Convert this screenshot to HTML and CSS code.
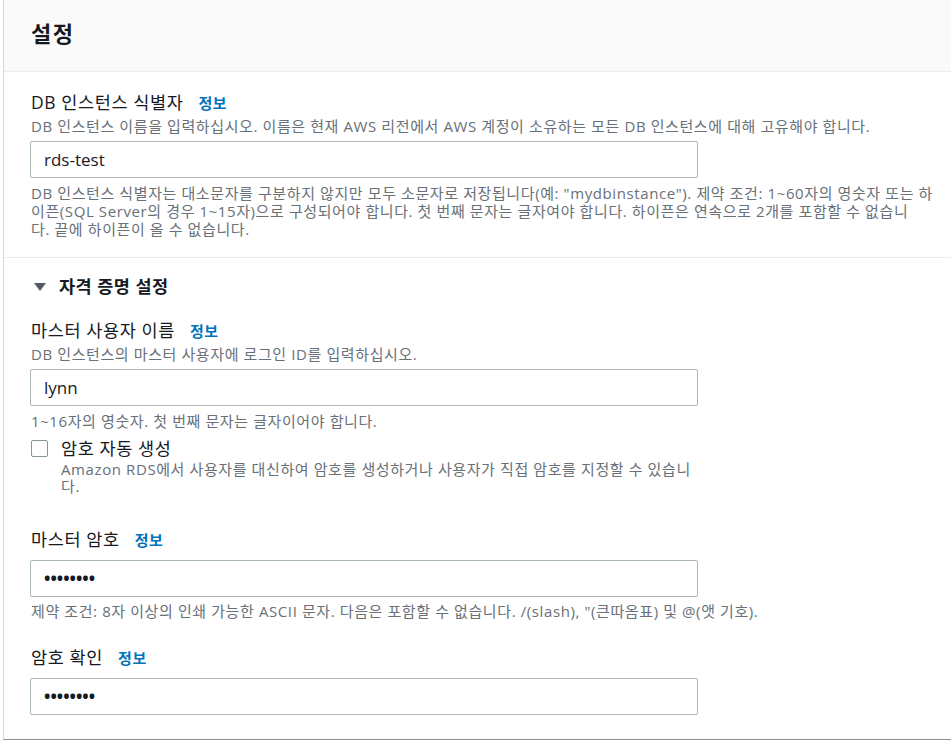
FILE: index.html
```html
<!DOCTYPE html>
<html lang="ko">
<head>
    <meta charset="UTF-8">
    <meta name="viewport" content="width=device-width, initial-scale=1.0">
    <title>설정</title>
    <link rel="stylesheet" href="styles.css">
</head>
<body>
<div class="panel">
    <div class="panel-header">
        <h2>설정</h2>
    </div>

    <div class="section">
        <div class="label">DB 인스턴스 식별자 <a class="info" href="#">정보</a></div>
        <div class="desc">DB 인스턴스 이름을 입력하십시오. 이름은 현재 AWS 리전에서 AWS 계정이 소유하는 모든 DB 인스턴스에 대해 고유해야 합니다.</div>
        <div class="input">rds-test</div>
        <div class="hint">DB 인스턴스 식별자는 대소문자를 구분하지 않지만 모두 소문자로 저장됩니다(예: "mydbinstance"). 제약 조건: 1~60자의 영숫자 또는 하이픈(SQL Server의 경우 1~15자)으로 구성되어야 합니다. 첫 번째 문자는 글자여야 합니다. 하이픈은 연속으로 2개를 포함할 수 없습니<br>다. 끝에 하이픈이 올 수 없습니다.</div>
    </div>

    <div class="section expand">
        <div class="expand-title"><span class="caret"></span>자격 증명 설정</div>

        <div class="field">
            <div class="label">마스터 사용자 이름 <a class="info" href="#">정보</a></div>
            <div class="desc">DB 인스턴스의 마스터 사용자에 로그인 ID를 입력하십시오.</div>
            <div class="input">lynn</div>
            <div class="hint">1~16자의 영숫자. 첫 번째 문자는 글자이어야 합니다.</div>
            <div class="check">
                <span class="box"></span>
                <div>
                    <div class="check-label">암호 자동 생성</div>
                    <div class="check-desc">Amazon RDS에서 사용자를 대신하여 암호를 생성하거나 사용자가 직접 암호를 지정할 수 있습니다.</div>
                </div>
            </div>
        </div>

        <div class="field password">
            <div class="label">마스터 암호 <a class="info" href="#">정보</a></div>
            <div class="input secret">••••••••</div>
            <div class="hint">제약 조건: 8자 이상의 인쇄 가능한 ASCII 문자. 다음은 포함할 수 없습니다. /(slash), "(큰따옴표) 및 @(앳 기호).</div>
        </div>

        <div class="field confirm">
            <div class="label">암호 확인 <a class="info" href="#">정보</a></div>
            <div class="input secret">••••••••</div>
        </div>
    </div>
</div>
</body>
</html>
```

FILE: styles.css
```css
body {
    margin: 0;
    padding: 0 0 0 3px;
    font-family: 'Open Sans', 'Noto Sans CJK KR', sans-serif;
    background-color: #fff;
    color: #16191f;
    overflow: hidden;
}

.panel {
    width: 960px;
    border-left: 1px solid #d5dbdb;
    border-bottom: 1px solid #879596;
}

.panel-header {
    box-sizing: border-box;
    height: 72px;
    background-color: #fafafa;
    border-bottom: 1px solid #eaeded;
    display: flex;
    align-items: center;
    padding: 0 0 6px 27px;
}

.panel-header h2 {
    margin: 0;
    font-size: 22px;
    font-weight: 700;
    line-height: 28px;
    letter-spacing: 1.5px;
}

.section {
    padding: 19px 20px 19px 26px;
    border-bottom: 1px solid #eaeded;
}

.section.expand {
    padding-top: 17px;
    padding-bottom: 24px;
    border-bottom: none;
}

.label {
    font-size: 17.5px;
    line-height: 22px;
    letter-spacing: 0.6px;
    padding-left: 1px;
}

.info {
    color: #0073bb;
    font-size: 15px;
    font-weight: 700;
    letter-spacing: 0.5px;
    text-decoration: none;
    margin-left: 10px;
}

.desc {
    margin-top: 3px;
    font-size: 15px;
    line-height: 18px;
    letter-spacing: 0.6px;
    color: #687078;
    padding-left: 1px;
}

.input {
    box-sizing: border-box;
    width: 668px;
    height: 37px;
    margin-top: 6px;
    border: 1px solid #aab7b8;
    border-radius: 2px;
    padding: 0 13px;
    display: flex;
    align-items: center;
    font-size: 17px;
}

.input.secret {
    font-size: 17px;
    font-weight: 700;
}

.hint {
    width: 910px;
    margin-top: 6px;
    font-size: 15px;
    line-height: 18px;
    letter-spacing: 0.6px;
    color: #687078;
    padding-left: 1px;
}

.expand-title {
    display: flex;
    align-items: center;
    font-size: 17.5px;
    font-weight: 700;
    line-height: 22px;
    letter-spacing: 0.5px;
    color: #16191f;
}

.caret {
    width: 0;
    height: 0;
    border-left: 6px solid transparent;
    border-right: 6px solid transparent;
    border-top: 8px solid #545b64;
    margin: 1px 13px 0 4px;
}

.field {
    margin-top: 22px;
}

.field .desc + .input {
    margin-top: 6px;
}

.check {
    display: flex;
    align-items: flex-start;
    margin-top: 7px;
    padding-left: 1px;
}

.box {
    flex: none;
    box-sizing: border-box;
    width: 17px;
    height: 17px;
    border: 1px solid #879596;
    border-radius: 2px;
    margin: 3px 13px 0 0;
}

.check-label {
    font-size: 17.5px;
    line-height: 22px;
    letter-spacing: 0.6px;
}

.check-desc {
    width: 640px;
    margin-top: 2px;
    font-size: 15px;
    line-height: 17px;
    letter-spacing: 0.6px;
    color: #687078;
}

.field.password {
    margin-top: 33px;
}

.field.confirm {
    margin-top: 26px;
}

.password .input {
    margin-top: 9px;
}

.password .hint {
    margin-top: 5px;
}

.confirm .input {
    margin-top: 9px;
}
```
